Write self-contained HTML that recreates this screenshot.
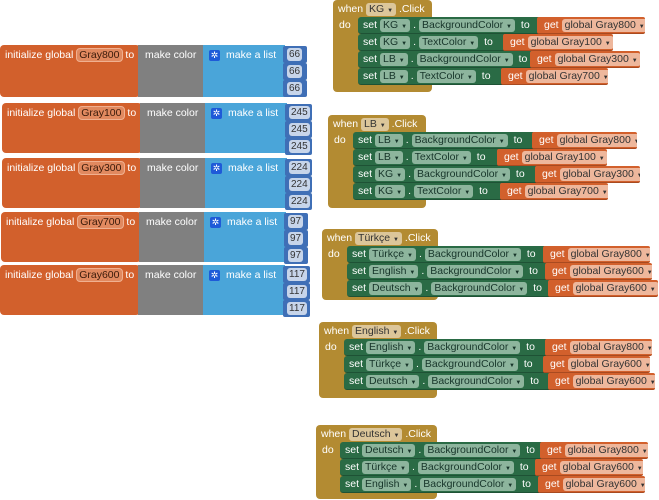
<!DOCTYPE html>
<html><head><meta charset="utf-8"><style>
body{margin:0;width:659px;height:500px;background:#fff;position:relative;overflow:hidden;font-family:"Liberation Sans",sans-serif;font-size:10.5px;color:#fff}
.a{position:absolute;box-sizing:border-box}
.or{background:#d2602c;border-radius:4px}
.gr{background:#808080}
.bl{background:#4aa5d9}
.nb{background:#3f6fb6;border-radius:2px}
.num{position:absolute;left:4px;top:2px;height:13px;line-height:13px;padding:0 2px;background:#c7d5ea;color:#333;border-radius:3px;font-size:10px}
.ev{background:#b38b32;border-radius:4px}
.sg{background:#2a6b45;border-radius:3px;display:flex;align-items:center;padding-left:5px;height:17px;border-bottom:1px solid #1e5235;white-space:nowrap;overflow:hidden}
.gt{background:#d2602c;border-radius:2px;display:flex;align-items:center;padding-left:7px;height:17px;border-bottom:1px solid #a84a20;white-space:nowrap;overflow:hidden}
.f{background:#8db59d;border-radius:3px;height:13px;line-height:13px;padding:0 3px;margin:0 3px;white-space:nowrap;color:#17352a}
.fg{background:#eeb79c;color:#333;border-radius:3px;height:13px;line-height:13px;padding:0 3px;margin-left:3px;white-space:nowrap}
.fe{background:#dcc69a;color:#333;border-radius:3px;height:13px;line-height:13px;padding:0 3px;display:inline-block}
.fo{background:#e1895f;color:#3a1a0a;border:1px solid #f0b090;border-radius:4px;padding:0 2px;line-height:12px;display:inline-block}
.ar{font-size:6px}
.t{position:absolute;white-space:nowrap;line-height:14px}
.gear{display:inline-block;width:11px;height:11px;background:#1e5ad8;border-radius:2px;color:#fff;font-size:9px;line-height:11px;text-align:center;vertical-align:middle;margin-right:6px}
</style></head><body>
<script>
var h='';
var inits=[[45,97,'Gray800','66',0],[103,153,'Gray100','245',2],[158,208,'Gray300','224',2],[212,262,'Gray700','97',1],[265,315,'Gray600','117',0]];
inits.forEach(function(b){var y=b[0],H=b[1]-b[0],x=b[4];
h+='<div class="a or" style="left:'+x+'px;top:'+y+'px;width:140px;height:'+H+'px"></div>';
h+='<div class="a gr" style="left:'+(x+138)+'px;top:'+y+'px;width:66px;height:'+H+'px"></div>';
h+='<div class="a bl" style="left:'+(x+203)+'px;top:'+y+'px;width:82px;height:'+H+'px"></div>';
h+='<div class="t" style="left:'+(x+5)+'px;top:'+(y+3)+'px">initialize global <span class="fo">'+b[2]+'</span> to</div>';
h+='<div class="t" style="left:'+(x+145)+'px;top:'+(y+3)+'px">make color</div>';
h+='<div class="t" style="left:'+(x+209)+'px;top:'+(y+3)+'px"><span class="gear">✲</span>make a list</div>';
for(var i=0;i<3;i++){h+='<div class="a nb" style="left:'+(x+283)+'px;top:'+(y+1+i*17)+'px;width:'+(b[3].length>2?27:24)+'px;height:17px"><span class="num">'+b[3]+'</span></div>';}
});
var A=' <span class="ar">▼</span>';
var evs=[
[333,0,92,432,'KG',[[358,537,645,'KG','BackgroundColor','Gray800'],[358,503,613,'KG','TextColor','Gray100'],[358,530,640,'LB','BackgroundColor','Gray300'],[358,501,608,'LB','TextColor','Gray700']]],
[328,115,208,426,'LB',[[353,532,637,'LB','BackgroundColor','Gray800'],[353,497,607,'LB','TextColor','Gray100'],[353,535,640,'KG','BackgroundColor','Gray300'],[353,500,608,'KG','TextColor','Gray700']]],
[322,229,300,438,'Türkçe',[[347,543,650,'Türkçe','BackgroundColor','Gray800'],[347,545,652,'English','BackgroundColor','Gray600'],[347,548,658,'Deutsch','BackgroundColor','Gray600']]],
[319,322,398,437,'English',[[344,545,652,'English','BackgroundColor','Gray800'],[344,543,650,'Türkçe','BackgroundColor','Gray600'],[344,548,655,'Deutsch','BackgroundColor','Gray600']]],
[316,425,499,437,'Deutsch',[[340,540,648,'Deutsch','BackgroundColor','Gray800'],[340,535,643,'Türkçe','BackgroundColor','Gray600'],[340,538,645,'English','BackgroundColor','Gray600']]]];
evs.forEach(function(e){var x=e[0],y=e[1];
h+='<div class="a ev" style="left:'+x+'px;top:'+y+'px;width:'+(e[3]-x)+'px;height:'+(e[2]-y)+'px"></div>';
h+='<div class="t" style="left:'+(x+5)+'px;top:'+(y+2)+'px">when <span class="fe">'+e[4]+A+'</span> .Click</div>';
h+='<div class="t" style="left:'+(x+6)+'px;top:'+(y+18)+'px">do</div>';
e[5].forEach(function(r,i){var ry=y+17+i*17;
h+='<div class="a sg" style="left:'+r[0]+'px;top:'+ry+'px;width:'+(r[1]-r[0]+4)+'px">set<span class="f">'+r[3]+A+'</span>.<span class="f">'+r[4]+A+'</span>&nbsp;to</div>';
h+='<div class="a gt" style="left:'+r[1]+'px;top:'+ry+'px;width:'+(r[2]-r[1])+'px">get<span class="fg">global '+r[5]+A+'</span></div>';
});});
document.write(h);
</script>
</body></html>
